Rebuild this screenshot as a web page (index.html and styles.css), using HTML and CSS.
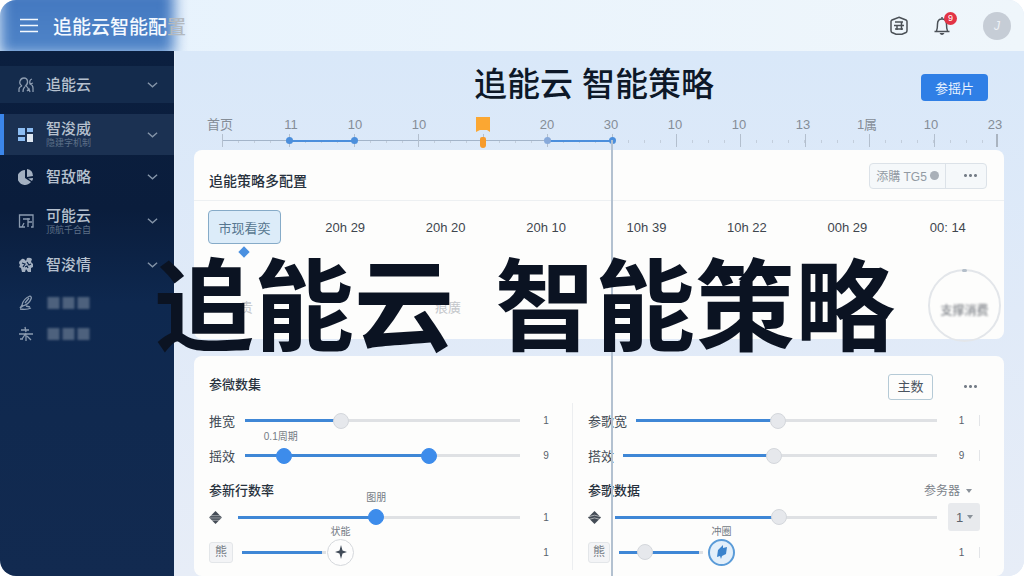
FILE: index.html
```html
<!DOCTYPE html>
<html lang="zh-CN">
<head>
  <meta charset="UTF-8">
  <meta name="viewport" content="width=device-width, initial-scale=1.0">
  <title>追能云智能配置</title>
  <link rel="stylesheet" href="styles.css">
</head>
<body>
  <div class="app">
    <header class="topbar">
      <div class="brand">
        <button class="icon-btn menu-btn" aria-label="菜单">
          <svg width="20" height="16" viewBox="0 0 20 16" fill="none" stroke="currentColor" stroke-width="1.6"><path d="M1 1.500h18M1 7.500h18M1 13.500h18"/></svg>
        </button>
        <span class="brand-name">追能云智能配<span class="brand-tail">置</span></span>
      </div>
      <div class="top-actions">
        <button class="icon-btn" aria-label="服务">
          <svg width="20" height="20" viewBox="0 0 20 20" fill="none" stroke="currentColor" stroke-width="1.5"><path d="M10 1.200 17 4q1 .5 1 1.500v9q0 1.500-1 2l-4 1.800H7l-4-1.800q-1-.5-1-2v-9Q2 4.500 3 4z"/><path d="M6 6h8M5 9.500h10M6 13h8M8 9v5M12.500 6v8"/></svg>
        </button>
        <button class="icon-btn bell" aria-label="通知">
          <svg width="18" height="20" viewBox="0 0 18 20" fill="none" stroke="currentColor" stroke-width="1.5"><path d="M1.500 15.500h15M3.500 15c1-2 1-4 1-7C4.500 4.500 6.500 3 9 3s4.500 1.500 4.500 5c0 3 0 5 1 7M9 1v2"/><path d="M6.500 17h5q-1 2-2.500 2t-2.500-2z" fill="currentColor" stroke="none"/></svg>
          <span class="badge">9</span>
        </button>
        <button class="avatar" aria-label="账户">J</button>
      </div>
    </header>

    <div class="body">
      <nav class="sidebar">
        <a href="#" class="nav-item raised">
          <svg class="nav-icon" viewBox="0 0 16 16"><path d="M1 15v-3q0-2 3-3M4 9q-3-2-2-5 1-3 4-3t3.500 3Q10 7 7.500 9q3 1 3 5M5 15q0-4 2-5M14 2q-3 1-2 5 3 1 3 4v4M12 7l3-1M9 14l2-2 1 3"/></svg>
          <span class="nav-text">追能云</span>
          <svg class="chev" viewBox="0 0 12 8"><path d="M1 1.500 6 6l5-4.500"/></svg>
        </a>
        <a href="#" class="nav-item active">
          <svg class="nav-icon solid" viewBox="0 0 16 16"><path d="M0 1h7v7H0zM9 1h6v4H9zM0 10h7v4H0z" fill="#8cbdf3"/><path d="M9 7h6v8H9z" fill="#dde6f0"/></svg>
          <span class="nav-text">智浚威<small>隐建字机制</small></span>
          <svg class="chev" viewBox="0 0 12 8"><path d="M1 1.500 6 6l5-4.500"/></svg>
        </a>
        <a href="#" class="nav-item">
          <svg class="nav-icon solid" viewBox="0 0 16 16"><path d="M7 1v8l6 4A7.500 7.500 0 1 1 7 1z"/><path d="M9 0q6 1 6 7l-6 1zM10 9.500l5-.5q0 2-1 3z"/></svg>
          <span class="nav-text">智敌略</span>
          <svg class="chev" viewBox="0 0 12 8"><path d="M1 1.500 6 6l5-4.500"/></svg>
        </a>
        <a href="#" class="nav-item">
          <svg class="nav-icon" viewBox="0 0 16 16"><path d="M7 14H1.500V2H15v12h-2M5 6h7M10 5v9M10 9h4M6 10l-2 4h3"/></svg>
          <span class="nav-text">可能云<small>顶航千合自</small></span>
          <svg class="chev" viewBox="0 0 12 8"><path d="M1 1.500 6 6l5-4.500"/></svg>
        </a>
        <a href="#" class="nav-item">
          <svg class="nav-icon solid" viewBox="0 0 16 16"><path d="M3 3q1-2 3-1l2 2 1-3q3-1 5 1l-1 3 2 2v3l-2 1v4h-3l-2-3-1 3H4l-1-4-2-1 1-2-1-2q0-2 2-3z"/><path d="M4 6l3 1-2 3M9 5l2 3 2-1M7 10l2-1 1 2" fill="none" stroke="#0d2549" stroke-width="1.200"/></svg>
          <span class="nav-text">智浚情</span>
          <svg class="chev" viewBox="0 0 12 8"><path d="M1 1.500 6 6l5-4.500"/></svg>
        </a>
        <a href="#" class="nav-item small dim">
          <svg class="nav-icon" viewBox="0 0 16 16"><path d="M4 10q1-6 8-9 2 1 1 3-2 5-8 7zM4 10l-2 3 3-2M7 8l4-5M2 14q7 1 11-1M8 11l4 1"/></svg>
          <span class="nav-text">■■■</span>
        </a>
        <a href="#" class="nav-item small dim">
          <svg class="nav-icon" viewBox="0 0 16 16"><path d="M3 4h8M7 1l1 5M1 8h14M8 7l-4 6M8 8v7M9 10l4 4M2 13h3"/></svg>
          <span class="nav-text">■■■</span>
        </a>
      </nav>

      <main class="main">
        <div class="page-head">
          <h1>追能云 智能策略</h1>
          <button class="btn-primary">参摇片</button>
        </div>

        <div class="ruler">
          <div class="ruler-labels">
            <span>首页</span><span>11</span><span>10</span><span>10</span>
            <span><svg width="14" height="15" viewBox="0 0 14 15"><path d="M0 0h14v15l-3-2H4l-4 2z" fill="#fba732"/></svg></span>
            <span>20</span><span>30</span><span>10</span><span>10</span><span>13</span><span>1属</span><span>10</span><span>23</span>
          </div>
          <div class="ruler-track">
            <div class="seg line"></div>
            <div class="seg blue"><i class="node"></i></div>
            <div class="seg line"><i class="node"></i></div>
            <div class="seg line"></div>
            <div class="seg line"><i class="node orange"></i></div>
            <div class="seg blue"><i class="node soft"></i></div>
            <div class="seg now"><i class="node"></i></div>
            <div class="seg"></div>
            <div class="seg"></div>
            <div class="seg"></div>
            <div class="seg"></div>
            <div class="seg last"></div>
          </div>
        </div>

        <section class="card times-card">
          <div class="card-head">
            <h2>追能策略多配置</h2>
            <div class="btn-group">
              <button>添購 TG5 <span class="dot"></span></button>
              <button aria-label="更多"><span class="dots"></span></button>
            </div>
          </div>
          <div class="times">
            <button class="time-chip">市现看奕</button>
            <span>20h 29</span><span>20h 20</span><span>20h 10</span><span>10h 39</span><span>10h 22</span><span>00h 29</span><span>00: 14</span>
          </div>
          <i class="pin"></i>
          <div class="ghost">
            <span>贵</span><span>痕廣</span>
          </div>
          <div class="dial"><span>支撑消费</span></div>
        </section>

        <section class="card params">
          <div class="params-head">
            <h2>参微数集</h2>
            <button class="btn-outline">主数</button>
            <button class="more" aria-label="更多"><span class="dots"></span></button>
          </div>
          <div class="params-grid">
            <div class="col left">
              <div class="row">
                <label for="l1">推宽</label>
                <input id="l1" type="range" value="34" style="--fill: 34%">
                <output>1</output>
              </div>
              <div class="row">
                <label for="l2">摇效</label>
                <div class="dual">
                  <input id="l2" class="blue-thumb" type="range" value="68" style="--fill: 68%">
                  <input class="blue-thumb over" type="range" value="12" aria-label="下限">
                  <span class="tip tip-low">0.1周期</span>
                </div>
                <output>9</output>
              </div>
              <h3>参新行数率</h3>
              <div class="row short">
                <svg class="gem" viewBox="0 0 14 14"><path d="M7 0 14 7 7 14 0 7z"/><path d="M1 5h12M0 7.500h14M2 10h10" stroke="#fdfdfc" stroke-width=".5"/></svg>
                <div class="dual">
                  <input class="blue-thumb" type="range" value="49" style="--fill: 49%" aria-label="图朋">
                  <span class="tip tip-mid">图朋</span>
                </div>
                <output>1</output>
              </div>
              <div class="row tall">
                <button class="tag">熊</button>
                <input class="mini no-thumb" type="range" value="100" style="--fill: 95%" aria-label="状能">
                <div class="round-wrap">
                  <button class="round" aria-label="添加"><svg width="14" height="14" viewBox="0 0 14 14"><path d="M7 0 8.500 5.500 13 7 8.500 8.500 7 14 5.500 8.500 1 7l4.500-1.500z" fill="#414b58"/></svg></button>
                  <span class="tip tip-round">状能</span>
                </div>
                <output>1</output>
              </div>
            </div>

            <div class="col right">
              <div class="row">
                <label for="r1">参歌宽</label>
                <input id="r1" type="range" value="47" style="--fill: 47%">
                <output>1</output>
              </div>
              <div class="row">
                <label for="r2">搭效</label>
                <input id="r2" type="range" value="48" style="--fill: 48%">
                <output>9</output>
              </div>
              <div class="sub-head">
                <h3>参歌数据</h3>
                <select class="plain-select" aria-label="参务器"><option>参务器</option></select>
              </div>
              <div class="row short">
                <svg class="gem" viewBox="0 0 14 14"><path d="M7 0 14 7 7 14 0 7z"/><path d="M1 6q6-3 12 0M1 9q6-3 12 0" fill="none" stroke="#fdfdfc" stroke-width=".6"/></svg>
                <input type="range" value="51" style="--fill: 51%" aria-label="数据">
                <div class="num-wrap"><select class="num-select" aria-label="数量"><option>1</option></select></div>
              </div>
              <div class="row tall">
                <button class="tag">熊</button>
                <input class="mini" type="range" value="26" style="--fill: 95%" aria-label="冲圈">
                <div class="round-wrap">
                  <button class="round on" aria-label="启动"><svg width="12" height="16" viewBox="0 0 12 16"><path d="M7 1v3l4-1-1 7-4 2-1 3-1-3-3 1 1-7z" fill="#3b83cc"/></svg></button>
                  <span class="tip tip-round">冲圈</span>
                </div>
                <output>1</output>
              </div>
            </div>
          </div>
        </section>

        <div class="watermark"><span>追能云</span><span>智能策略</span></div>
      </main>
    </div>
  </div>
</body>
</html>
```
FILE: styles.css
```css
* {
  margin: 0;
  padding: 0;
  box-sizing: border-box;
}

body {
  font-family: "Liberation Sans", "Noto Sans CJK SC", sans-serif;
  font-size: 13px;
  color: #2b3440;
  background: #fff;
}

button,
select,
input {
  font: inherit;
  color: inherit;
  border: none;
  background: none;
}

button {
  cursor: pointer;
}

a {
  color: inherit;
  text-decoration: none;
}

.app {
  display: flex;
  flex-direction: column;
  min-height: 100vh;
  border-radius: 16px;
  overflow: hidden;
  background: #dfe9f7;
}

/* top bar */
.topbar {
  display: flex;
  justify-content: space-between;
  align-items: center;
  height: 51px;
  padding-right: 18px;
  background: linear-gradient(90deg, #e6f2fd, #eff6fb);
  position: relative;
  overflow: hidden;
}

.brand {
  display: flex;
  align-items: center;
  gap: 14px;
  height: 100%;
  padding-left: 19px;
  color: #f4f9ff;
  position: relative;
}

.brand::before {
  content: "";
  position: absolute;
  top: -12px;
  bottom: -4px;
  left: 0;
  width: 174px;
  background: linear-gradient(#4176bf, #5085c8);
  filter: blur(7px);
}

.brand > * {
  position: relative;
}

.brand-name {
  font-size: 19px;
  font-weight: 500;
  white-space: nowrap;
}

.brand-tail {
  color: #b3b9bf;
}

.icon-btn {
  display: flex;
  position: relative;
}

.top-actions {
  display: flex;
  align-items: center;
  gap: 24px;
  color: #4b5157;
}

.badge {
  position: absolute;
  top: -4px;
  right: -6px;
  width: 13px;
  height: 13px;
  border-radius: 50%;
  background: #e23345;
  color: #fff;
  font-size: 9px;
  line-height: 13px;
  text-align: center;
}

.avatar {
  width: 28px;
  height: 28px;
  margin-left: 8px;
  margin-right: -5px;
  border-radius: 50%;
  background: #c6cdd6;
  color: #eef2f6;
  font-size: 12px;
  font-style: italic;
}

.body {
  display: flex;
  flex: 1;
}

/* sidebar */
.sidebar {
  flex: 0 0 175px;
  padding-top: 15px;
  border-right: 1px solid #e4edf8;
  background: linear-gradient(#0b1f3f, #0a1d3c 30%, #0e284f 48%, #10294f 70%, #122a50);
  color: #b6c1cf;
}

.nav-item {
  display: flex;
  align-items: center;
  gap: 12px;
  height: 44px;
  padding: 0 16px 0 18px;
}

.nav-item.raised {
  height: 37px;
  margin-bottom: 11px;
  background: #142b4c;
}

.nav-item.active {
  height: 41px;
  padding-left: 14px;
  border-left: 4px solid #3b86ea;
  background: #1b3152;
}

.nav-item.small {
  height: 31px;
}

.nav-icon {
  width: 16px;
  height: 16px;
  fill: none;
  stroke: #8b9bb0;
  stroke-width: 1.3;
}

.nav-icon.solid {
  fill: #a3b0c1;
  stroke: none;
}

.nav-text {
  flex: 1;
  font-size: 15px;
  line-height: 18px;
  font-weight: 500;
}

.nav-text small {
  display: block;
  font-size: 9px;
  line-height: 11px;
  font-weight: 400;
  color: #5d7088;
}

.dim .nav-text {
  font-family: "Noto Sans CJK SC", sans-serif;
  color: #4d617d;
  filter: blur(1px);
}

.chev {
  width: 11px;
  height: 8px;
  fill: none;
  stroke: #8494a8;
  stroke-width: 1.5;
}

/* main */
.main {
  flex: 1;
  min-width: 0;
  padding: 0 20px 0 19px;
  background: linear-gradient(#d9e8f9, #e0eaf8 50%, #e7edf7);
  position: relative;
}

.page-head {
  display: grid;
  grid-template-columns: 1fr auto 1fr;
  align-items: center;
  height: 66px;
  padding: 2px 10px 0 0;
}

.page-head h1 {
  grid-column: 2;
  font-size: 33px;
  line-height: 40px;
  font-weight: 500;
  color: #0d1828;
}

.btn-primary {
  justify-self: end;
  width: 67px;
  height: 27px;
  margin: 4px 6px 0 0;
  border-radius: 4px;
  background: #2f7fe6;
  color: #e6f1ff;
}

/* ruler */
.ruler {
  height: 33px;
  padding-left: 19px;
}

.ruler-labels {
  display: flex;
  height: 17px;
  margin: 0 -23px 0 -6px;
  color: #858d97;
}

.ruler-labels span {
  display: flex;
  flex: 1;
  justify-content: center;
  line-height: 15px;
  white-space: nowrap;
}

.ruler-labels span:first-child {
  flex: 0 0 52px;
  justify-content: flex-start;
}

.ruler-track {
  display: grid;
  grid-template-columns: 67fr repeat(11, 64fr);
  height: 13px;
  margin: 0 6px 0 9px;
}

.seg {
  position: relative;
  border-left: 1px solid #b3bfce;
  background: repeating-linear-gradient(90deg, transparent 0 15px, #c3cedc 15px 16px) 0 6px / 100% 3px no-repeat;
}

.seg.line::before,
.seg.blue::before {
  content: "";
  position: absolute;
  top: 6px;
  left: 0;
  right: 0;
  height: 1px;
  background: #a3b4c9;
}

.seg.blue::before {
  height: 2px;
  background: #4c8fdc;
}

.seg.last {
  border-right: 2px solid #aab4c0;
}

.node {
  position: absolute;
  z-index: 1;
  top: 3px;
  left: -4px;
  width: 7px;
  height: 7px;
  border-radius: 50%;
  background: #4c8fdc;
}

.node.soft {
  background: #87a9da;
}

.node.orange {
  width: 6px;
  height: 11px;
  border-radius: 4px 4px 6px 6px;
  background: #f79b2b;
}

/* the current-time line runs down over both cards */
.seg.now::after {
  content: "";
  position: absolute;
  z-index: 1;
  top: 6px;
  left: -2px;
  width: 2px;
  height: 100vh;
  background: #b3c1d0;
}

/* cards */
.card {
  border-radius: 8px;
  background: #fdfdfc;
  position: relative;
}

h2,
h3 {
  font-size: 13px;
  font-weight: 500;
  color: #27313d;
}

.times-card {
  height: 189px;
  margin-bottom: 17px;
}

.card-head {
  display: flex;
  justify-content: space-between;
  align-items: center;
  height: 51px;
  padding: 9px 17px 0 15px;
  border-bottom: 1px solid #edf0f2;
}

.card-head h2 {
  font-size: 14px;
}

.btn-group {
  display: flex;
  height: 26px;
  margin-bottom: 8px;
  border: 1px solid #dce2e8;
  border-radius: 4px;
  background: #f5f8fa;
  color: #929aa3;
  font-size: 12px;
}

.btn-group button {
  display: flex;
  align-items: center;
  justify-content: center;
  gap: 3px;
  width: 75px;
  white-space: nowrap;
}

.btn-group button + button {
  width: 41px;
  border-left: 1px solid #dce2e8;
  padding-left: 8px;
}

.dot {
  width: 9px;
  height: 9px;
  border-radius: 50%;
  background: #a9b0b8;
}

.dots {
  display: block;
  width: 15px;
  height: 3px;
  background: radial-gradient(circle, #767e88 1px, transparent 2px) 0 0 / 5px 3px;
}

.times {
  display: grid;
  grid-template-columns: 87px repeat(7, 1fr);
  align-items: center;
  height: 34px;
  margin: 9px 6px 0 14px;
  text-align: center;
  color: #3f464e;
}

.time-chip {
  width: 73px;
  height: 34px;
  border: 1px solid #86abc8;
  border-radius: 4px;
  background: #dcecf9;
  color: #56768f;
}

.pin {
  display: block;
  width: 8px;
  height: 8px;
  margin: 4px 0 0 46px;
  background: #4a90e0;
  transform: rotate(45deg);
}

.ghost {
  display: flex;
  gap: 182px;
  width: 250px;
  height: 60px;
  padding-left: 46px;
  align-items: flex-end;
  color: #c4c7cb;
  white-space: nowrap;
}

.dial {
  position: absolute;
  right: 3px;
  bottom: -3px;
  display: flex;
  align-items: center;
  justify-content: center;
  width: 73px;
  height: 73px;
  padding-top: 8px;
  border: 2px solid #e3e6ea;
  border-radius: 50%;
}

.dial::before {
  content: "";
  position: absolute;
  top: -2px;
  width: 5px;
  height: 3px;
  border-radius: 2px;
  background: #b4bfca;
}

.dial span {
  font-size: 12px;
  font-weight: 500;
  color: #7f8389;
  filter: blur(1px);
}

/* parameters */
.params {
  padding: 0 16px 6px 15px;
}

.params-head {
  display: flex;
  align-items: center;
  height: 47px;
  padding-top: 14px;
}

.params-head h2 {
  flex: 1;
  margin-bottom: 6px;
}

.btn-outline {
  width: 45px;
  height: 26px;
  border: 1px solid #b5cad6;
  border-radius: 3px;
  color: #4a545f;
  line-height: 22px;
}

.more {
  margin: 0 10px 0 30px;
}

.params-grid {
  display: grid;
  grid-template-columns: 364fr 400fr;
  gap: 15px;
}

.col.left {
  border-right: 1px solid #eceef0;
}

.row {
  display: flex;
  align-items: center;
  height: 35px;
}

.row label {
  margin-right: 10px;
  color: #434b55;
}

.right .row label {
  margin-right: 9px;
}

.col h3 {
  line-height: 35px;
}

.row.short {
  height: 18px;
}

.row.tall {
  height: 36px;
  margin-top: 8px;
}

.sub-head {
  display: flex;
  justify-content: space-between;
  align-items: center;
  height: 35px;
}

.row output {
  flex: 0 0 52px;
  margin-left: auto;
  text-align: center;
  font-size: 10px;
  color: #59616b;
}

.right .row output {
  flex-basis: 43px;
  margin-right: 8px;
  padding-left: 7px;
  border-right: 1px solid #e3e5e8;
}

.gem {
  flex: none;
  width: 13px;
  height: 13px;
  margin-right: 16px;
  fill: #444c56;
}

.right .gem {
  margin-right: 14px;
}

/* sliders */
input[type="range"] {
  -webkit-appearance: none;
  appearance: none;
  display: block;
  flex: 1;
  width: 100%;
  min-width: 0;
  height: 16px;
  background: linear-gradient(90deg, #3f87d6 var(--fill), #dfe1e4 var(--fill)) 0 50% / 100% 3px no-repeat;
}

input[type="range"]::-webkit-slider-thumb {
  -webkit-appearance: none;
  width: 16px;
  height: 16px;
  border: 1px solid #d4d7dc;
  border-radius: 50%;
  background: #e6e8ec;
}

input.blue-thumb::-webkit-slider-thumb {
  border-color: #3d8ceb;
  background: #3d8ceb;
}

input.no-thumb::-webkit-slider-thumb {
  visibility: hidden;
}

input[type="range"].mini {
  flex: 0 0 84px;
}

.dual {
  flex: 1;
  position: relative;
}

input[type="range"].over {
  position: absolute;
  inset: 0;
  background: none;
  pointer-events: none;
}

.tip {
  position: absolute;
  bottom: 19px;
  transform: translateX(-50%);
  font-size: 10px;
  line-height: 16px;
  color: #747b84;
  white-space: nowrap;
}

.tip-low {
  left: 13%;
}

.tip-mid {
  left: 49%;
}

.tip-round {
  left: 50%;
  bottom: 26px;
}

.tag {
  width: 24px;
  height: 21px;
  margin-right: 9px;
  border: 1px solid #e3e6e9;
  border-radius: 3px;
  background: #f3f4f6;
  color: #737b84;
  font-size: 12px;
  line-height: 18px;
}

.right .tag {
  width: 22px;
}

.round-wrap {
  position: relative;
  margin-left: 1px;
}

.right .round-wrap {
  margin-left: 5px;
}

.round {
  display: flex;
  align-items: center;
  justify-content: center;
  width: 27px;
  height: 27px;
  border: 1px solid #d5d8dc;
  border-radius: 50%;
  background: #fdfdfd;
}

.round.on {
  border: 2px solid #5a9bd8;
  background: #e3effa;
}

/* drop-downs */
select {
  -webkit-appearance: none;
  appearance: none;
  background: no-repeat right 16px center / 6px 4px
    url("data:image/svg+xml,%3Csvg xmlns='http://www.w3.org/2000/svg' viewBox='0 0 6 4'%3E%3Cpath d='M0 0h6L3 4z' fill='%238a9199'/%3E%3C/svg%3E");
}

.plain-select {
  padding-right: 27px;
  font-size: 12px;
  color: #7b828a;
}

.num-wrap {
  display: flex;
  flex: 0 0 51px;
  padding-left: 11px;
}

.num-select {
  width: 32px;
  height: 28px;
  padding-left: 8px;
  border-radius: 3px;
  background-color: #e8eaed;
  background-position: right 7px center;
  color: #5c646d;
}

/* large headline lying over the content */
.watermark {
  position: absolute;
  z-index: 2;
  top: 197px;
  left: -21px;
  display: flex;
  gap: 41px;
  font-size: 100px;
  line-height: 120px;
  font-weight: 700;
  color: #0b1322;
  white-space: nowrap;
  pointer-events: none;
}
```
